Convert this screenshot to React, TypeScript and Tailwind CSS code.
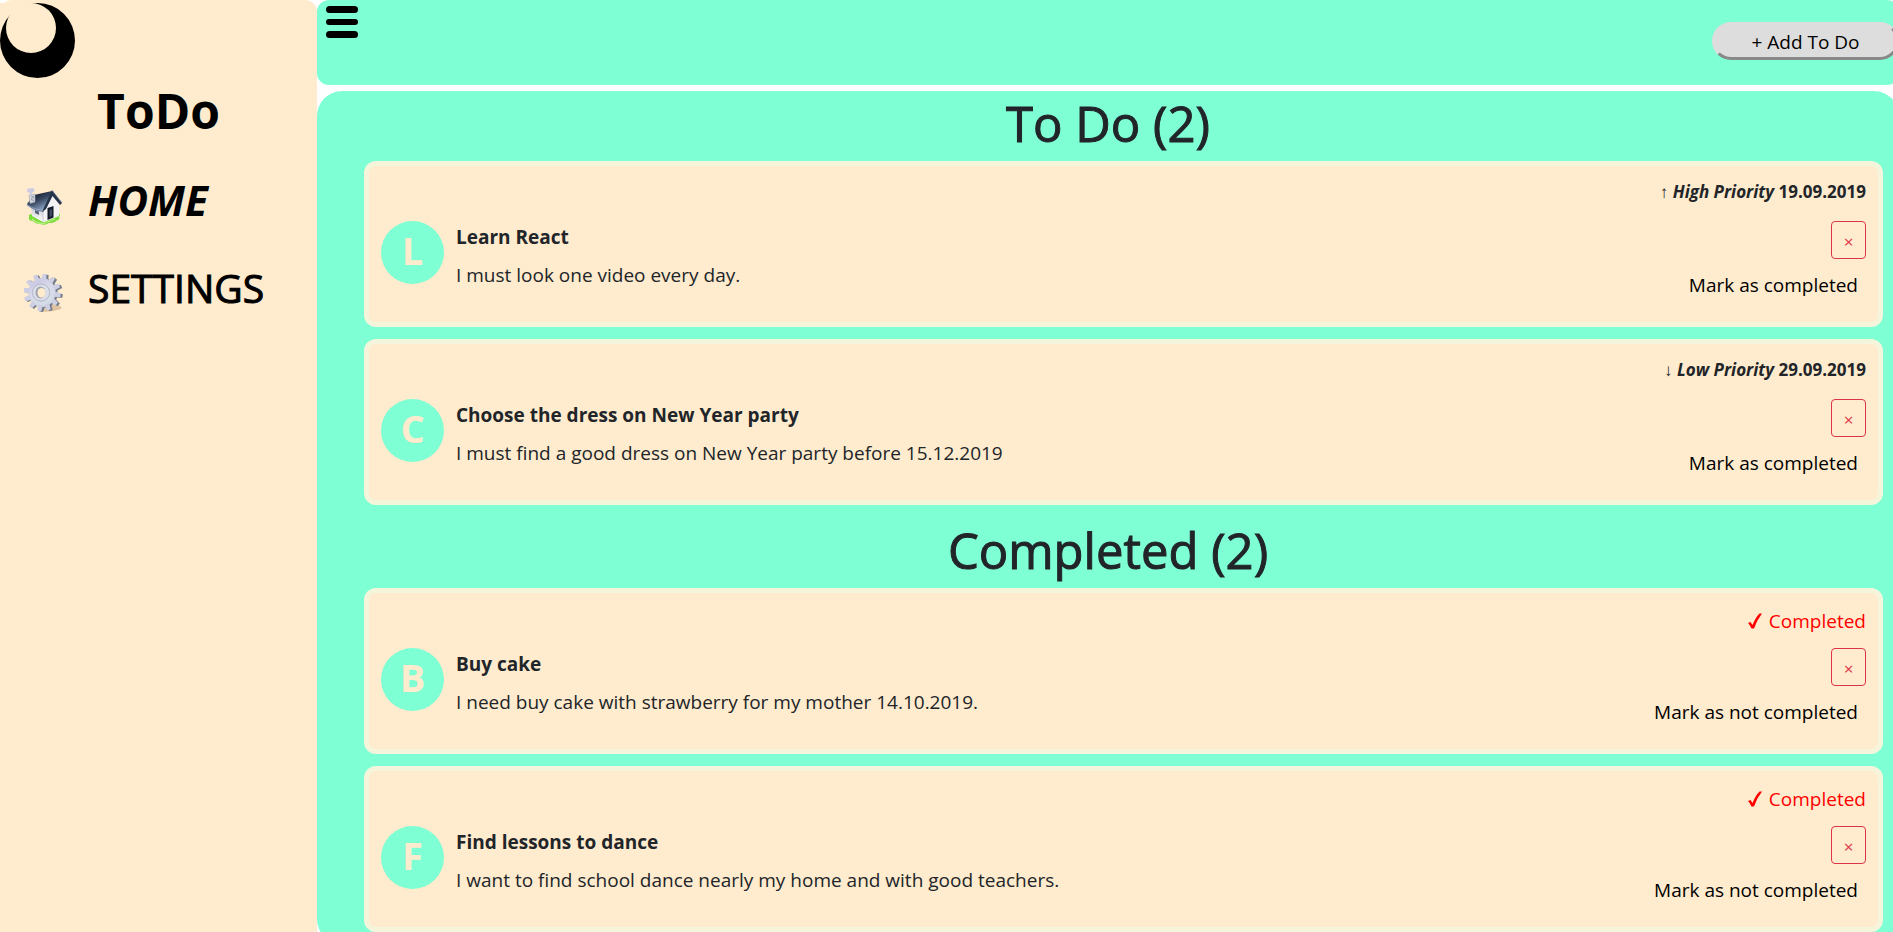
import React from "react";

type Todo = {
  title: string;
  text: string;
  completed: boolean;
  priority?: "High" | "Low";
  date?: string;
};

const openTodos: Todo[] = [
  { title: "Learn React", text: "I must look one video every day.", completed: false, priority: "High", date: "19.09.2019" },
  {
    title: "Choose the dress on New Year party",
    text: "I must find a good dress on New Year party before 15.12.2019",
    completed: false,
    priority: "Low",
    date: "29.09.2019",
  },
];

const doneTodos: Todo[] = [
  { title: "Buy cake", text: "I need buy cake with strawberry for my mother 14.10.2019.", completed: true },
  { title: "Find lessons to dance", text: "I want to find school dance nearly my home and with good teachers.", completed: true },
];

function MoonLogo() {
  return (
    <svg className="block size-[75px]" viewBox="0 0 75 75" aria-hidden="true">
      <circle cx="37.5" cy="37.5" r="37.5" fill="#000" />
      <circle cx="31" cy="25" r="25" fill="#ffebcd" />
      <path d="M0 0H33V0A25 25 0 0 0 9 12L0 25Z" fill="#ffebcd" />
    </svg>
  );
}

function HouseIcon() {
  return (
    <svg className="mt-3.5 block size-10" viewBox="0 0 40 40" aria-hidden="true">
      <defs>
        <linearGradient id="roof" x1="0" y1="0" x2="0.6" y2="1">
          <stop offset="0.1" stopColor="#10151d" />
          <stop offset="0.55" stopColor="#34445c" />
          <stop offset="1" stopColor="#8fa6c8" />
        </linearGradient>
        <linearGradient id="wall" x1="0" y1="0" x2="0" y2="1">
          <stop offset="0" stopColor="#c9cbd3" />
          <stop offset="1" stopColor="#ffffff" />
        </linearGradient>
      </defs>
      <path d="M5 30Q4 27 8 27L32 25Q38 27 35 30Q37 32 32 34Q30 36 25 36Q21 39 16 37Q11 37 9 34Q4 34 5 30Z" fill="#7ddc3c" />
      <path d="M8 32Q13 37 20 36.500L31 32" fill="none" stroke="#b4f080" strokeWidth="1.2" />
      <path d="M7 20L19 24V35L8 29Z" fill="url(#wall)" />
      <path d="M19 24L29 8L35 18V29L19 35.500Z" fill="#f4f4f6" />
      <path d="M19 24V35.500" stroke="#b9bcc6" strokeWidth="0.7" />
      <path d="M11 23L15 24.500V28L11 26Z" fill="#59657a" />
      <path d="M23.500 21L29.500 19V30.500L23.500 33Z" fill="#151b26" />
      <path d="M25.500 23L28 22V29L25.500 30Z" fill="#3b4a62" />
      <path d="M10 8L28 4L21 23Q12 24 3 17Z" fill="url(#roof)" />
      <path d="M3 17.500Q12 24.500 20 24" fill="none" stroke="#6f84a6" strokeWidth="1.2" />
      <path d="M28 3L38 16L36 18L28.500 9L22 22L18 25Z" fill="#26344a" />
      <path d="M28.500 4L38 16" stroke="#6a7c9a" strokeWidth="0.8" />
      <path d="M5 8L11 7V15L6 16.500Z" fill="#cfd4dc" stroke="#a4abb8" strokeWidth="0.6" />
      <path d="M7 9L10 10L7 12L10 14" fill="none" stroke="#8d95a3" strokeWidth="0.8" />
      <path d="M3 3.500Q3 .5 6 1.500Q10 0 10.500 3Q10 6 8 5.500V7.500H6V6Q3 6 3 3.500Z" fill="#cfcde4" />
    </svg>
  );
}

const teeth = [0, 30, 60, 90, 120, 150, 180, 210, 240, 270, 300, 330];

function GearIcon() {
  return (
    <svg className="mt-2.5 block size-10" viewBox="0 0 40 40" aria-hidden="true">
      <defs>
        <linearGradient id="gear" x1="0" y1="0" x2="0.5" y2="1">
          <stop offset="0" stopColor="#c2bcdf" />
          <stop offset="0.5" stopColor="#d9daea" />
          <stop offset="1" stopColor="#d3dde6" />
        </linearGradient>
      </defs>
      <path d="M14 38Q26 40 37 36Q39 34 33 32L22 30Z" fill="#cfae86" opacity="0.65" />
      <g fill="#747d8c" transform="translate(1.6 0.8)">
        <ellipse cx="18.5" cy="19.5" rx="13.5" ry="14.5" />
        {teeth.map((a) => (
          <path key={a} d="M16 7L16.800 .8H20.400L21 7Z" transform={`rotate(${a + 8} 18.5 19.5)`} />
        ))}
      </g>
      <g fill="url(#gear)">
        <ellipse cx="18" cy="19.5" rx="13.5" ry="14.5" />
      </g>
      <g fill="#cfcfe4">
        {teeth.map((a) => (
          <path key={a} d="M15.300 7L16.200 .8H19.800L20.700 7Z" transform={`rotate(${a + 8} 18 19.5)`} />
        ))}
      </g>
      <circle cx="17" cy="19.5" r="8.6" fill="#dcdfea" stroke="#b2b6c6" strokeWidth="1" />
      <ellipse cx="16.5" cy="19.5" rx="5" ry="6" fill="#9fa4b0" />
      <ellipse cx="17.5" cy="19.8" rx="4" ry="4.9" fill="#ffebcd" />
    </svg>
  );
}

function TodoCard({ todo }: { todo: Todo }) {
  return (
    <li className="flex h-[166px] rounded-xl border-5 border-[#f5f5dc] bg-[#ffebcd] px-3">
      <div className="mt-[55px] flex size-[63px] shrink-0 items-center justify-center rounded-full bg-[#7fffd4] pb-1.5 text-[38px] font-bold leading-none text-[#ffebcd]">
        {todo.title[0]}
      </div>
      <div className="mt-[55px] min-w-0 grow pl-3">
        <h2 className="text-[19px] leading-8 font-bold">{todo.title}</h2>
        <p className="mt-1.5 text-[19px] leading-8">{todo.text}</p>
      </div>
      <div className="flex shrink-0 flex-col items-end pt-2.5">
        {todo.completed ? (
          <p className="flex h-[45px] items-start gap-1.5 pt-0.5 text-[19px] leading-8 text-[#ff0000]">
            <svg className="mt-2 size-4" viewBox="0 0 16 16" aria-hidden="true">
              <path d="M1 10L3.500 9L5.500 12Q8.500 4.500 12.500 .5H15Q10 7 7 15.500H4.500Q3 12 1 10Z" fill="currentColor" />
            </svg>
            Completed
          </p>
        ) : (
          <p className="h-[45px] text-[17px] leading-8 font-bold">
            <span className="font-normal">{todo.priority === "High" ? "↑" : "↓"}</span> <em>{todo.priority} Priority</em> {todo.date}
          </p>
        )}
        <button
          type="button"
          aria-label={`Delete ${todo.title}`}
          className="h-[38px] w-[35px] rounded border border-[#dc3545] pt-0.5 text-[17px] leading-none text-[#dc3545]"
        >
          ×
        </button>
        <button type="button" className="mt-2.5 mr-2 text-[19px] leading-8 text-black">
          {todo.completed ? "Mark as not completed" : "Mark as completed"}
        </button>
      </div>
    </li>
  );
}

function TodoSection({ title, todos }: { title: string; todos: Todo[] }) {
  return (
    <section>
      <h1 className="h-[70px] text-center text-[49px] leading-[64px] font-medium [-webkit-text-stroke:1px_currentColor]">
        {title} ({todos.length})
      </h1>
      <ul className="flex flex-col gap-3 pr-4 pb-3 pl-[47px]">
        {todos.map((todo) => (
          <TodoCard key={todo.title} todo={todo} />
        ))}
      </ul>
    </section>
  );
}

export default function App() {
  return (
    <div className="flex h-screen overflow-hidden bg-white font-['Open_Sans','Noto_Sans',sans-serif] text-[#212529]">
      <aside className="w-[317px] shrink-0 rounded-t-xl bg-[#ffebcd] pt-[3px] text-black">
        <MoonLogo />
        <p className="text-center text-5xl leading-[66px] font-bold">ToDo</p>
        <nav className="mt-[26px] flex flex-col gap-7">
          <a href="#home" className="flex items-center pl-6 text-[42px] leading-[60px] font-bold italic">
            <HouseIcon />
            <span className="pl-6">HOME</span>
          </a>
          <a href="#settings" className="flex items-center pl-6 text-[39px] leading-[60px] font-medium [-webkit-text-stroke:1px_currentColor]">
            <GearIcon />
            <span className="pl-6">SETTINGS</span>
          </a>
        </nav>
      </aside>
      <div className="-mr-1.5 flex min-w-0 grow flex-col gap-1.5">
        <header className="flex h-[85px] shrink-0 items-start justify-between rounded-xl bg-[#7fffd4] pl-[9px]">
          <button type="button" aria-label="Toggle menu" className="mt-1.5 flex flex-col gap-1.5">
            <span className="block h-[7px] w-8 rounded-full bg-black" />
            <span className="block h-[6px] w-8 rounded-full bg-black" />
            <span className="block h-[7px] w-8 rounded-full bg-black" />
          </button>
          <button
            type="button"
            className="mt-[22px] h-[38px] w-[187px] rounded-[20px] border-3 border-t-[#dddddd] border-r-[#888888] border-b-[#888888] border-l-[#dddddd] bg-[#dddddd] pt-0.5 text-[19px] leading-none text-black"
          >
            + Add To Do
          </button>
        </header>
        <main className="flex shrink-0 flex-col gap-px rounded-[25px] bg-[#7fffd4]">
          <TodoSection title="To Do" todos={openTodos} />
          <TodoSection title="Completed" todos={doneTodos} />
        </main>
      </div>
    </div>
  );
}
